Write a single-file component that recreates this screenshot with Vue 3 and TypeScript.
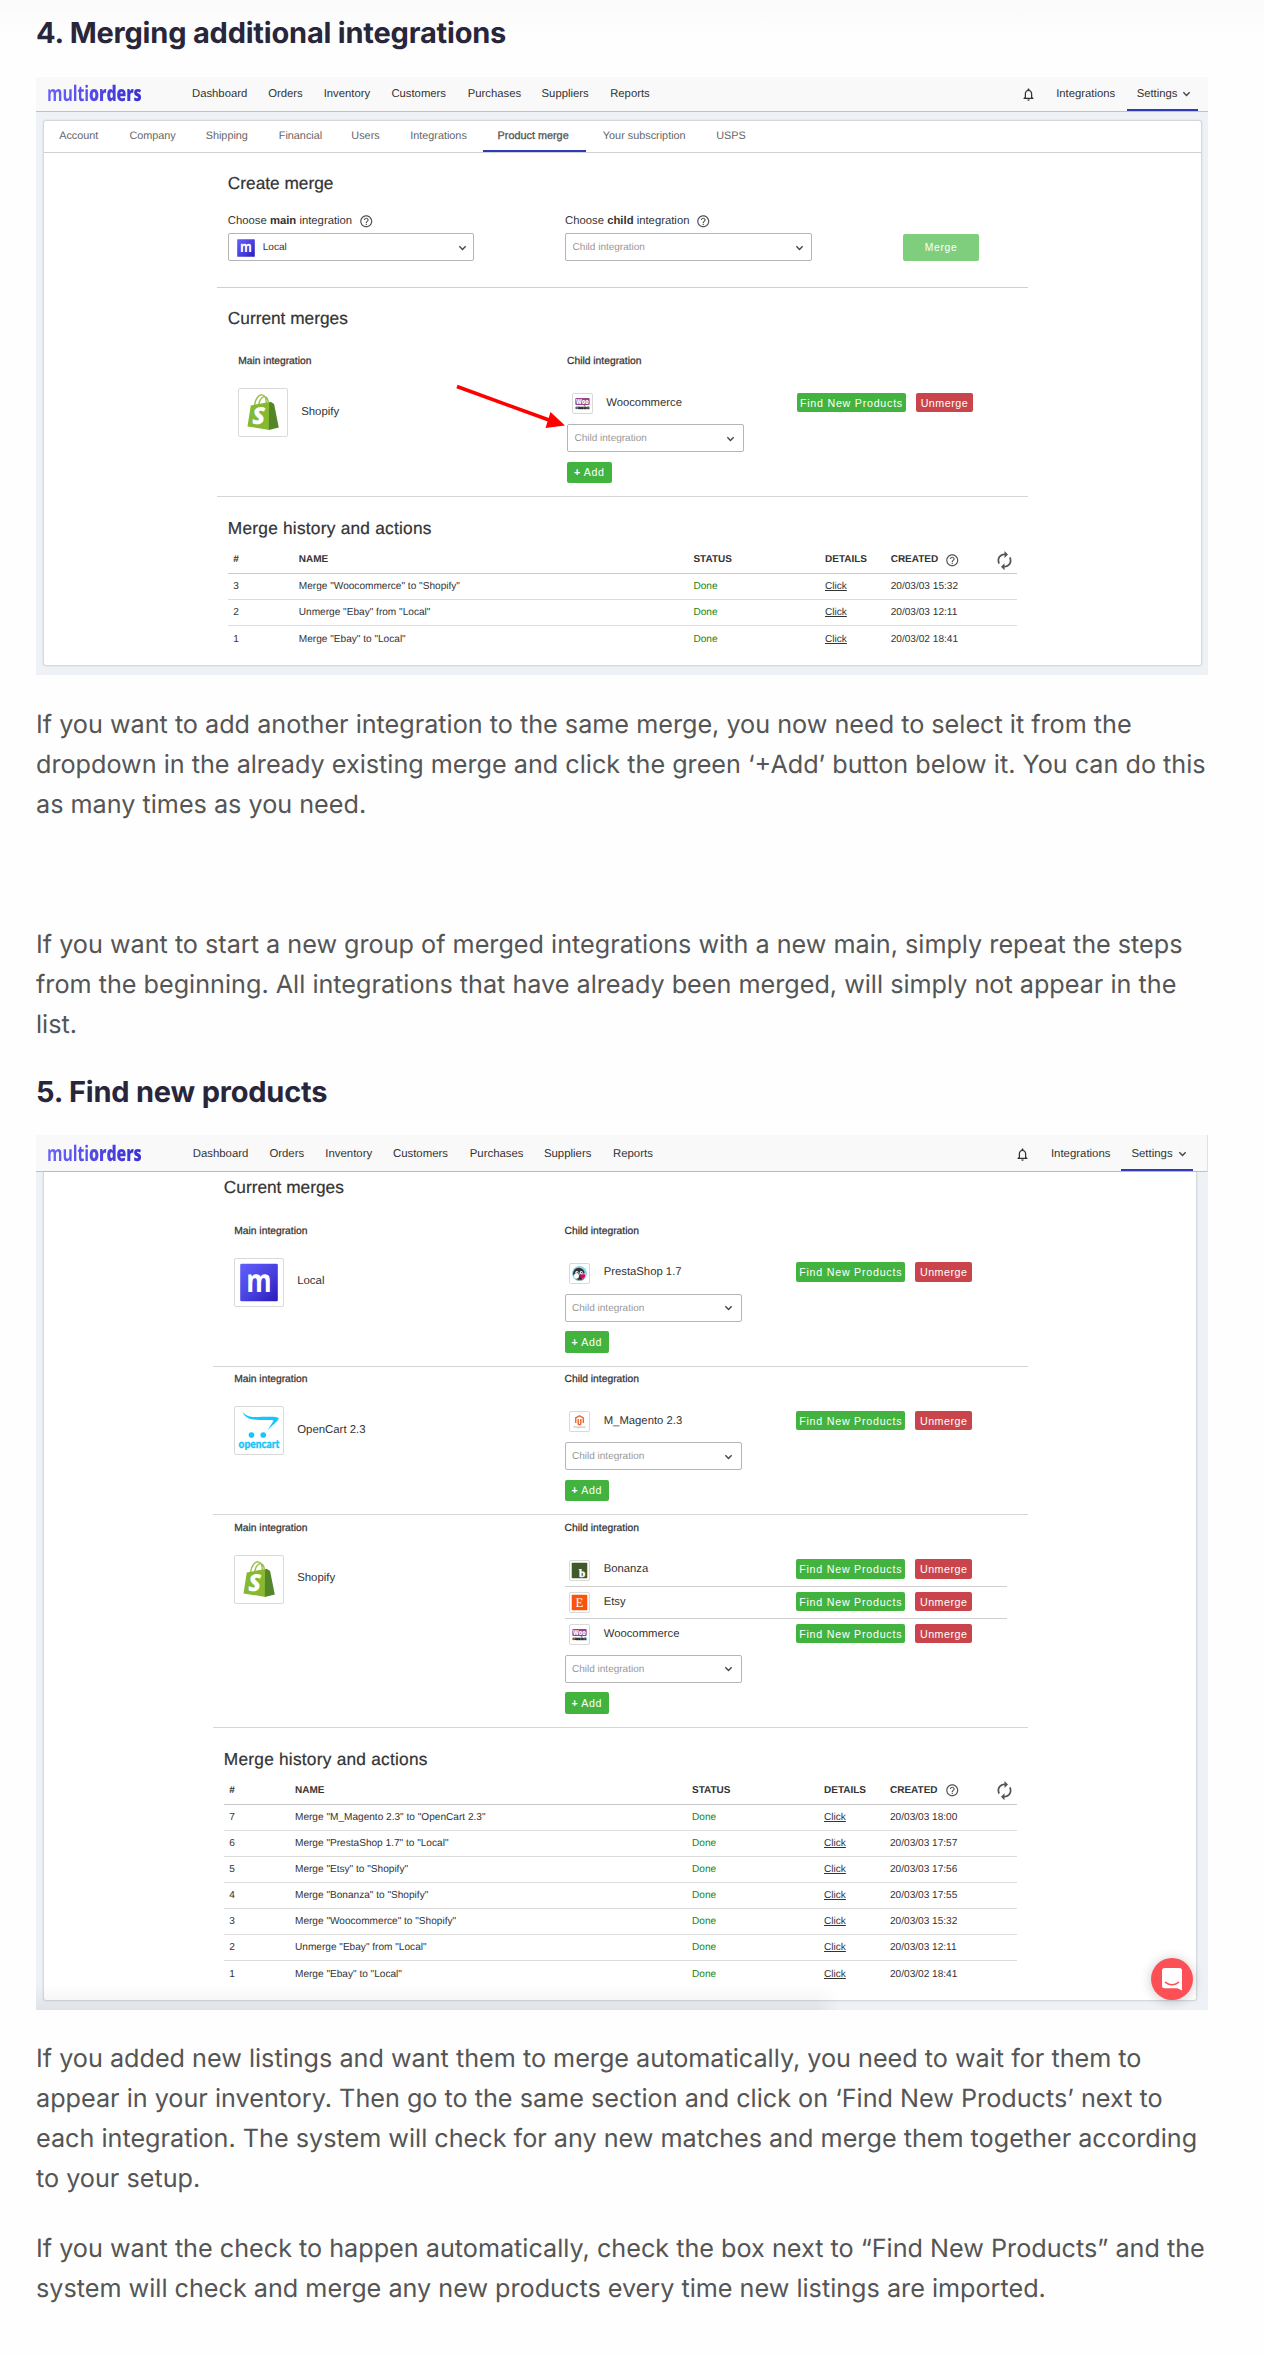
<script setup lang="ts">
interface Child { name: string; icon: string }
interface Group { name: string; icon: string; children: Child[] }
interface HistoryRow { id: number; name: string; created: string }
interface Shot { id: string; full: boolean; groups: Group[]; history: HistoryRow[] }

const nav: string[] = ['Dashboard', 'Orders', 'Inventory', 'Customers', 'Purchases', 'Suppliers', 'Reports']
const tabs: string[] = ['Account', 'Company', 'Shipping', 'Financial', 'Users', 'Integrations', 'Product merge', 'Your subscription', 'USPS']

const baseHistory: HistoryRow[] = [
  { id: 3, name: 'Merge "Woocommerce" to "Shopify"', created: '20/03/03 15:32' },
  { id: 2, name: 'Unmerge "Ebay" from "Local"', created: '20/03/03 12:11' },
  { id: 1, name: 'Merge "Ebay" to "Local"', created: '20/03/02 18:41' },
]

const shots: Shot[] = [
  {
    id: 'one',
    full: true,
    groups: [{ name: 'Shopify', icon: 'shopify', children: [{ name: 'Woocommerce', icon: 'woo' }] }],
    history: baseHistory,
  },
  {
    id: 'two',
    full: false,
    groups: [
      { name: 'Local', icon: 'local', children: [{ name: 'PrestaShop 1.7', icon: 'presta' }] },
      { name: 'OpenCart 2.3', icon: 'opencart', children: [{ name: 'M_Magento 2.3', icon: 'magento' }] },
      {
        name: 'Shopify',
        icon: 'shopify',
        children: [
          { name: 'Bonanza', icon: 'bonanza' },
          { name: 'Etsy', icon: 'etsy' },
          { name: 'Woocommerce', icon: 'woo' },
        ],
      },
    ],
    history: [
      { id: 7, name: 'Merge "M_Magento 2.3" to "OpenCart 2.3"', created: '20/03/03 18:00' },
      { id: 6, name: 'Merge "PrestaShop 1.7" to "Local"', created: '20/03/03 17:57' },
      { id: 5, name: 'Merge "Etsy" to "Shopify"', created: '20/03/03 17:56' },
      { id: 4, name: 'Merge "Bonanza" to "Shopify"', created: '20/03/03 17:55' },
      ...baseHistory,
    ],
  },
]

const titles: string[] = ['4. Merging additional integrations', '5. Find new products']
const copy: string[][][] = [
  [
    [
      'If you want to add another integration to the same merge, you now need to select it from the',
      'dropdown in the already existing merge and click the green ‘+Add’ button below it. You can do this',
      'as many times as you need.',
    ],
    [
      'If you want to start a new group of merged integrations with a new main, simply repeat the steps',
      'from the beginning. All integrations that have already been merged, will simply not appear in the',
      'list.',
    ],
  ],
  [
    [
      'If you added new listings and want them to merge automatically, you need to wait for them to',
      'appear in your inventory. Then go to the same section and click on ‘Find New Products’ next to',
      'each integration. The system will check for any new matches and merge them together according',
      'to your setup.',
    ],
    [
      'If you want the check to happen automatically, check the box next to “Find New Products” and the',
      'system will check and merge any new products every time new listings are imported.',
    ],
  ],
]
</script>

<template>
  <main class="article">
    <svg class="defs" width="0" height="0" aria-hidden="true">
      <defs>
        <linearGradient id="violet" x1="0" y1="0" x2="1" y2="1">
          <stop offset="0" stop-color="#625ffb" /><stop offset="0.5" stop-color="#4a43e2" /><stop offset="1" stop-color="#2a1cb8" />
        </linearGradient>
      </defs>
    </svg>
    <svg class="sprite" aria-hidden="true">
      <symbol id="local" viewBox="0 0 50 50">
        <rect x="5" y="5" width="40" height="40" rx="1.5" fill="url(#violet)" />
        <text x="25" y="35" text-anchor="middle" textLength="27" lengthAdjust="spacingAndGlyphs" font-family="Open Sans, sans-serif" font-weight="700" font-size="34" fill="#fff">m</text>
      </symbol>
      <symbol id="shopify" viewBox="0 0 50 50">
        <path d="M16 17C17 10 21 5.800 24 6.200C27 6.500 28.500 10.500 28.500 15M20.500 16C21.500 11 24.500 7.600 27 8.200C29.500 9 30.500 12 30.700 14.500" fill="none" stroke="#95bf47" stroke-width="1.500" />
        <path d="M12 17.500L32 13.800V43.500L8.500 39.800Z" fill="#86b92f" />
        <path d="M31.500 14L33 13.600L36.800 16L41.800 41L31.200 43.500Z" fill="#558529" />
        <text x="20.500" y="37.500" text-anchor="middle" font-family="Open Sans, sans-serif" font-style="italic" font-weight="800" font-size="25" fill="#fff">S</text>
      </symbol>
      <symbol id="opencart" viewBox="0 0 50 50">
        <path d="M7.800 5.500C13 11 19 11 28 10.500C38 10.200 44 10 46 12C46 15 38 20 34 25C36 21 39 17 40.500 14.500C39 13.500 34 14 26 13.800C15 13.500 10 11.500 7.800 5.500Z" fill="#13c6fb" />
        <circle cx="17" cy="29.800" r="3" fill="#13c6fb" /><circle cx="29.500" cy="29.800" r="3" fill="#13c6fb" />
        <text x="3.200" y="44" textLength="43.500" lengthAdjust="spacingAndGlyphs" font-family="Lato, sans-serif" font-weight="900" font-size="12.500" fill="#13c6fb" stroke="#13c6fb" stroke-width="0.300">opencart</text>
      </symbol>
      <symbol id="woo" viewBox="0 0 22 22">
        <path d="M4 4.500H18A1.300 1.300 0 0 1 19.300 5.800V11.500A1.300 1.300 0 0 1 18 12.800H14L14.500 14.300L11.500 12.800H4A1.300 1.300 0 0 1 2.700 11.500V5.800A1.300 1.300 0 0 1 4 4.500Z" fill="#96458f" />
        <text x="3.600" y="11.700" textLength="14.800" lengthAdjust="spacingAndGlyphs" font-family="Open Sans, sans-serif" font-weight="800" font-size="8" fill="#fff">Woo</text>
        <text x="3" y="17.900" textLength="16" lengthAdjust="spacingAndGlyphs" font-family="Open Sans, sans-serif" font-weight="800" font-size="3.600" fill="#111" stroke="#111" stroke-width="0.300">COMMERCE</text>
      </symbol>
      <symbol id="presta" viewBox="0 0 22 22">
        <circle cx="11" cy="11" r="8.700" fill="#8fd6e8" />
        <path d="M6 17C8 19.800 14 20 17 17L14 15H8Z" fill="#a58a63" />
        <path d="M3.500 11C4 6 8 3.800 11.500 4.500C15 5 17 8 16.800 10.500L13 12L14 18C9 19 5 17 3.500 11Z" fill="#30323c" />
        <ellipse cx="7.500" cy="14" rx="2.900" ry="3.200" fill="#fff" />
        <circle cx="8" cy="9.800" r="1.800" fill="#fff" /><circle cx="13" cy="10" r="1.800" fill="#fff" />
        <circle cx="8.300" cy="10" r="0.700" fill="#222" /><circle cx="13.200" cy="10" r="0.700" fill="#222" />
        <path d="M9.500 10.500L12.500 11L11 13.200Z" fill="#f5a12d" />
        <path d="M10.500 13L17 11.500L17.500 15L14.500 17Z" fill="#df0067" />
      </symbol>
      <symbol id="magento" viewBox="0 0 22 22">
        <path d="M6.600 12.600V6.900L11 4.400L15.400 6.900V12.600M9.500 8V14L11 14.900L12.500 14V8" fill="none" stroke="#ee6b33" stroke-width="1.700" />
        <text x="4" y="18.600" textLength="14" lengthAdjust="spacingAndGlyphs" font-family="Lato, sans-serif" font-size="3.800" fill="#999">Magento</text>
      </symbol>
      <symbol id="bonanza" viewBox="0 0 22 22">
        <rect x="2" y="2" width="18" height="18" rx="0.800" fill="#415a2b" />
        <text x="10.300" y="18.300" font-family="Liberation Serif, serif" font-weight="700" font-size="13" fill="#fff" stroke="#fff" stroke-width="0.500">b</text>
      </symbol>
      <symbol id="etsy" viewBox="0 0 22 22">
        <rect x="2" y="2" width="18" height="18" rx="0.800" fill="#f9530d" />
        <text x="11" y="16.200" text-anchor="middle" font-family="Liberation Serif, serif" font-size="15" fill="#fff">E</text>
      </symbol>
      <symbol id="help" viewBox="0 0 24 24">
        <path d="M11 18h2v-2h-2v2zm1-16C6.480 2 2 6.480 2 12s4.480 10 10 10 10-4.480 10-10S17.520 2 12 2zm0 18c-4.410 0-8-3.590-8-8s3.590-8 8-8 8 3.590 8 8-3.590 8-8 8zm0-14c-2.210 0-4 1.790-4 4h2c0-1.100.9-2 2-2s2 .9 2 2c0 2-3 1.750-3 5h2c0-2.250 3-2.500 3-5 0-2.210-1.790-4-4-4z" fill="#555" />
      </symbol>
      <symbol id="chev" viewBox="0 0 10 10">
        <path d="M1.500 3L5 6.700L8.500 3" fill="none" stroke="#444" stroke-width="1.500" />
      </symbol>
      <symbol id="bell" viewBox="0 0 24 24">
        <path d="M12 22c1.100 0 2-.9 2-2h-4c0 1.100.9 2 2 2zm6-6v-5c0-3.070-1.630-5.640-4.500-6.320V4c0-.83-.67-1.500-1.500-1.500s-1.500.67-1.500 1.500v.68C7.640 5.360 6 7.920 6 11v5l-2 2v1h16v-1l-2-2zm-2 1H8v-6c0-2.480 1.510-4.500 4-4.500s4 2.020 4 4.500v6z" fill="#333" />
      </symbol>
      <symbol id="refresh" viewBox="0 0 24 24">
        <path d="M12 6v3l4-4-4-4v3c-4.420 0-8 3.580-8 8 0 1.570.46 3.030 1.240 4.260L6.700 14.800c-.45-.83-.7-1.790-.7-2.800 0-3.310 2.690-6 6-6zm6.760 1.740L17.300 9.200c.44.84.7 1.790.7 2.800 0 3.310-2.690 6-6 6v-3l-4 4 4 4v-3c4.420 0 8-3.580 8-8 0-1.570-.46-3.030-1.240-4.260z" fill="#555" />
      </symbol>
    </svg>

    <section v-for="(shot, s) in shots" :key="shot.id" :class="['step', shot.id]">
      <h2>{{ titles[s] }}</h2>

      <div class="shot">
        <header class="nav">
          <span class="brand"><span class="brand-text">multi<b>orders</b></span></span>
          <span v-for="n in nav" :key="n">{{ n }}</span>
          <svg class="bell"><use href="#bell" /></svg>
          <span>Integrations</span>
          <span class="settings">Settings<svg class="chev"><use href="#chev" /></svg></span>
        </header>

        <div class="panel">
          <nav v-if="shot.full" class="tabs">
            <span v-for="t in tabs" :key="t" :class="{ active: t === 'Product merge' }">{{ t }}</span>
          </nav>

          <div class="content">
            <div v-if="shot.full" class="create">
              <h3>Create merge</h3>
              <div class="form">
                <div class="field">
                  <label>Choose <b>main</b> integration<svg class="help"><use href="#help" /></svg></label>
                  <div class="select filled"><svg class="mini"><use href="#local" /></svg><span>Local</span><svg class="chev"><use href="#chev" /></svg></div>
                </div>
                <div class="field">
                  <label>Choose <b>child</b> integration<svg class="help"><use href="#help" /></svg></label>
                  <div class="select"><span>Child integration</span><svg class="chev"><use href="#chev" /></svg></div>
                </div>
                <button class="merge">Merge</button>
              </div>
            </div>

            <h3 class="current">Current merges</h3>
            <div v-for="g in shot.groups" :key="g.name" class="group">
              <div class="main-col">
                <p class="label">Main integration</p>
                <div class="main-item">
                  <span class="tile"><svg><use :href="'#' + g.icon" /></svg></span>
                  <span>{{ g.name }}</span>
                </div>
              </div>
              <div class="child-col">
                <p class="label">Child integration</p>
                <div class="children">
                  <div v-for="c in g.children" :key="c.name" class="child">
                    <span class="child-tile"><svg><use :href="'#' + c.icon" /></svg></span>
                    <span class="child-name">{{ c.name }}</span>
                    <button class="find">Find New Products</button>
                    <button class="unmerge">Unmerge</button>
                  </div>
                </div>
                <div class="select"><span>Child integration</span><svg class="chev"><use href="#chev" /></svg></div>
                <button class="add"><b>+</b> Add</button>
              </div>
            </div>

            <div class="history">
              <h3>Merge history and actions</h3>
              <div class="row head">
                <span>#</span><span>NAME</span><span>STATUS</span><span>DETAILS</span>
                <span class="created">CREATED<svg class="help"><use href="#help" /></svg></span>
                <svg class="refresh"><use href="#refresh" /></svg>
              </div>
              <div v-for="r in shot.history" :key="r.id" class="row">
                <span>{{ r.id }}</span><span>{{ r.name }}</span><span class="done">Done</span><span><u>Click</u></span><span>{{ r.created }}</span>
              </div>
            </div>
          </div>
        </div>

        <template v-if="!shot.full">
          <div class="shade"></div>
          <div class="chat">
            <svg viewBox="0 0 42 42" width="42" height="42">
              <path d="M13.500 10H28.500Q31 10 31 12.500V32.500L26.500 30.300H13.500Q11 30.300 11 27.800V12.500Q11 10 13.500 10Z" fill="#fff" />
              <path d="M14.500 24.300Q21 29 27.500 24.300" fill="none" stroke="#fd5056" stroke-width="1.500" stroke-linecap="round" />
            </svg>
          </div>
        </template>
        <svg v-else class="arrow" viewBox="0 0 112 48">
          <path d="M2 5.500L94 39" stroke="#fe0000" stroke-width="3.600" />
          <path d="M110 44.500L95.500 31L90.500 47Z" fill="#fe0000" />
        </svg>
      </div>

      <div class="copy">
        <p v-for="(p, i) in copy[s]" :key="i"><span v-for="line in p" :key="line">{{ line }}</span></p>
      </div>
    </section>
  </main>
</template>

<style>
body { margin: 0; background: #fff; }
</style>

<style scoped>
.article {
  width: 1264px; height: 2354px; box-sizing: border-box; padding: 0 56px 0 36px; overflow: hidden;
  background: linear-gradient(#fafafa, #fefefe 36px, #fefefe);
  font-family: "Liberation Sans", Arial, sans-serif; color: #333; text-rendering: geometricPrecision;
}
.defs { position: absolute; }
.sprite { display: none; }
h2 { margin: 0; box-sizing: border-box; font: 700 29px/36px Inter, sans-serif; color: #29263b; white-space: nowrap; letter-spacing: -0.2px; }
.one h2 { padding-top: 15px; height: 62px; }
.two h2 { padding-top: 1.500px; height: 63px; }
h3 { margin: 0; font-size: 17.300px; line-height: 20px; font-weight: 400; color: #333; white-space: nowrap; -webkit-text-stroke: 0.2px #333; }
p { margin: 0; }
button { font-family: inherit; border: 0; margin: 0; padding: 0; color: #fff; border-radius: 2px; white-space: nowrap; display: flex; align-items: center; justify-content: center; }

.shot { position: relative; width: 1172px; background: #eef2f6; display: flex; flex-direction: column; }
.one .shot { height: 598px; margin-top: 15px; }
.two .shot { height: 875px; }

.nav {
  box-sizing: border-box; flex: none; display: grid; align-items: center; background: #f9f9f9;
  border-bottom: 1px solid #bfc1c3; font-size: 11.300px; white-space: nowrap;
}
.one .nav { height: 35px; padding-bottom: 1px; grid-template-columns: 156px 76.200px 55.500px 67.700px 76.400px 73.800px 68.600px 411px 35px 70.500px 1fr; }
.two .nav { height: 37px; padding-top: 1px; font-size: 11.400px; border-right: 1px solid #dde0e4; grid-template-columns: 156.700px 76.700px 55.900px 67.700px 76.800px 74.200px 69px 402px 36px 70.500px 1fr; }
.brand { padding-left: 10.500px; display: block; }
.brand-text { display: inline-block; transform-origin: left; transform: scaleX(0.735); font: 700 21.500px/22px "Open Sans", sans-serif; letter-spacing: -0.1px; background: linear-gradient(90deg, #6a63fb, #3a2fd0); background-clip: text; color: transparent; }
.brand-text b { font-weight: 800; }
.bell { width: 15px; height: 15px; margin-top: 1px; }
.settings { position: relative; align-self: stretch; display: flex; align-items: center; gap: 5px; padding-left: 10px; width: 61.500px; }
.one .settings { margin-bottom: -1px; padding-bottom: 1px; }
.settings::after { content: ""; position: absolute; left: 0; right: 0; bottom: 0; height: 2px; background: #2f3bb4; }
.chev { width: 9px; height: 10px; flex: none; }

.panel { margin: 0 auto 0 7px; box-sizing: border-box; background: #fff; border: 1px solid #d5d9dd; box-shadow: 0 0 2px rgba(0,0,0,.12); border-radius: 3px; }
.one .panel { margin-top: 8px; width: 1159px; height: 546px; }
.two .panel { width: 1154px; height: 829px; border-top: 0; border-radius: 0 0 3px 3px; }
.tabs {
  height: 32px; box-sizing: border-box; display: grid; align-items: center; border-bottom: 1px solid #cfd1d3; font-size: 10.850px; color: #666; white-space: nowrap;
  grid-template-columns: 70.200px 76.300px 73.100px 72.600px 58.800px 87.400px 105.300px 113.300px 1fr; padding-left: 15.200px;
}
.tabs span { position: relative; height: 31px; line-height: 30px; }
.tabs .active { color: #555; -webkit-text-stroke: 0.3px #555; }
.tabs .active::after { content: ""; position: absolute; left: -14.500px; width: 103px; bottom: 0; height: 2px; background: #2f3bb4; }

.content { --child: 350px; --btn: 229.700px; margin-left: 173px; width: 810.500px; }
.two .content { --child: 351.500px; --btn: 231.500px; margin-left: 169px; width: 815px; padding-top: 5px; }
.content h3 { padding-left: 10.800px; }
.create { padding-top: 19.700px; height: 114.300px; border-bottom: 1px solid #cfcfcf; }
.form { display: flex; padding-left: 10.800px; margin-top: 21.500px; }
.field { width: 337.300px; }
.field label { display: flex; align-items: center; height: 14px; line-height: 15px; font-size: 11.300px; white-space: pre; }
.help { width: 14.500px; height: 14.500px; margin-left: 7px; flex: none; }
.select { box-sizing: border-box; height: 28px; width: 177px; border: 1px solid #b5b5b5; border-radius: 2px; display: flex; align-items: center; justify-content: space-between; padding: 1px 8px 0 6.500px; font-size: 10px; color: #999; background: #fff; }
.field .select { margin-top: 5.200px; width: 246.500px; padding-right: 6.500px; }
.select.filled { color: #333; padding-left: 6px; justify-content: flex-start; }
.filled span { flex: 1; }
.mini { width: 22px; height: 22px; margin-right: 6px; }
.merge { width: 76px; height: 27px; margin: 19.800px 0 0 0.700px; padding-top: 1px; background: #7fce7d; font-size: 10.300px; letter-spacing: .7px; }

h3.current { margin-top: 20.400px; }
.two h3.current { margin-top: 0; }
.one .current { margin-bottom: 20.300px; }
.two .current { margin-bottom: 21px; }
.group { box-sizing: border-box; display: flex; border-bottom: 1px solid #d6d6d6; padding-top: 5.500px; min-height: 148.500px; }
.main-col { width: var(--child); box-sizing: border-box; padding-left: 21.200px; flex: none; }
.label { font-size: 10.300px; line-height: 15px; height: 14px; -webkit-text-stroke: 0.25px #333; }
.main-item { display: flex; align-items: center; gap: 13px; margin-top: 20px; font-size: 11.400px; }
.tile { box-sizing: border-box; width: 50px; height: 49px; border: 1px solid #d9d9d9; border-radius: 2px; display: flex; }
.tile svg { width: 48px; height: 47px; }
.main-item span:last-child { margin-top: -2px; }
.child-col { flex: 1; padding-bottom: 13px; }
.children { margin: 19.500px 13px 4.500px 0; }
.two .children { margin-right: 21.500px; }
.child { height: 32px; box-sizing: border-box; display: flex; align-items: center; padding-left: 4.700px; font-size: 11.300px; }
.child + .child { border-top: 1px solid #d0d0d0; }
.child-tile { box-sizing: border-box; width: 21px; height: 21px; border: 1px solid #d9d9d9; border-radius: 2px; display: flex; }
.child-tile svg { width: 19px; height: 19px; }
.child-name { margin-left: 13.500px; width: calc(var(--btn) - 39.200px); margin-top: -2px; }
.find, .unmerge { height: 19.500px; font-size: 10.700px; letter-spacing: .75px; margin-bottom: 2px; }
.find { width: 109.500px; background: #43b340; }
.unmerge { width: 57px; background: #c9454b; margin-left: 9.700px; letter-spacing: .5px; }
.add { width: 44.500px; height: 21.500px; margin-top: 9.500px; background: #43b340; font-size: 10.600px; letter-spacing: .6px; white-space: pre; }

.history { padding-top: 21px; }
.history h3 { letter-spacing: 0.24px; }
.row { margin-left: 10.800px; width: 789px; height: 26.150px; box-sizing: border-box; display: grid; align-items: center; border-bottom: 1px solid #dcdcdc; font-size: 10.100px; padding: 1px 0 0 5.500px; white-space: nowrap; grid-template-columns: 65.500px 394.600px 131.600px 65.700px 108px 1fr; }
.two .row { grid-template-columns: 65.700px 397px 132px 66px 109px 1fr; width: 793.500px; }
.row:last-child { border-bottom: 0; }
.row.head { margin-top: 9px; height: 27px; padding-top: 0; font-weight: 700; font-size: 10px; border-color: #c9c9c9; }
.row span { line-height: 14px; }
.created { display: flex; align-items: center; }
.refresh { width: 21px; height: 21px; margin-left: -4.500px; }
.done { color: #1c8507; }

.arrow { position: absolute; left: 419px; top: 304px; width: 112px; height: 48px; }
.shade { position: absolute; left: 0; bottom: 0; width: 805px; height: 26px; background: linear-gradient(rgba(0,0,0,0), rgba(0,0,0,.055)); -webkit-mask: linear-gradient(90deg, #000 97%, transparent); mask: linear-gradient(90deg, #000 97%, transparent); }
.chat { position: absolute; left: 1115px; top: 823px; width: 42px; height: 42px; border-radius: 50%; background: #fd5056; box-shadow: 0 1px 12px rgba(0,0,0,.22); }
.chat svg { display: block; }

.copy { font: 400 25.200px/40px Inter, sans-serif; color: #555; }
.copy span { display: block; white-space: nowrap; }
.one .copy { box-sizing: border-box; height: 397px; padding-top: 30px; }
.one .copy p + p { margin-top: 100px; }
.two .copy { padding-top: 29px; }
.two .copy p + p { margin-top: 30px; }
</style>
